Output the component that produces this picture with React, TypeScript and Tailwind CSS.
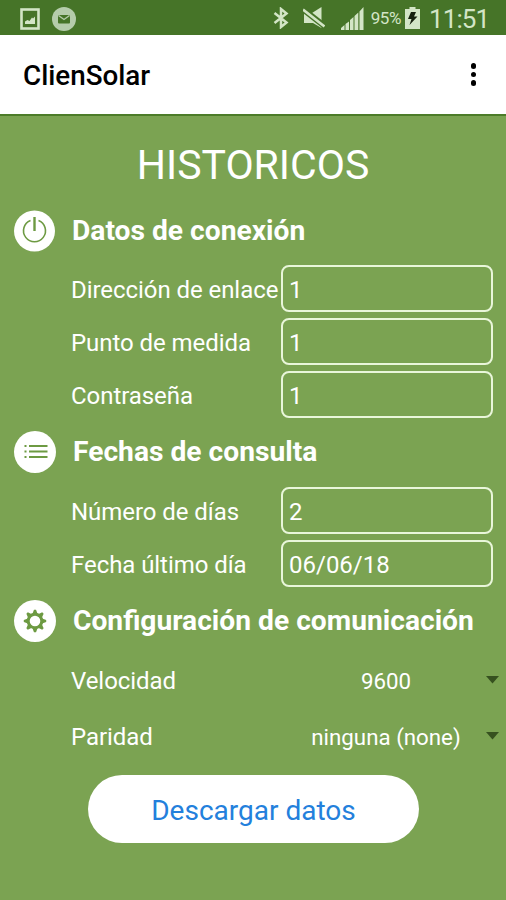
import type { ReactNode } from 'react'

function StatusBar() {
  return (
    <div className="flex h-[35px] shrink-0 items-center justify-between bg-[#467428] pl-5 pr-4 text-[#d3e5c6]">
      <div className="flex items-center gap-3 pt-0.5">
        <svg width="20" height="22" viewBox="0 0 20 22">
          <rect x="1.5" y="1.5" width="17" height="19" fill="none" stroke="currentColor" strokeWidth="2.6" />
          <path d="M5 16v-2.500l2.500-1.500 2 1L12 9.500l1 1 2-2V16z" fill="currentColor" />
        </svg>
        <svg width="24" height="24" viewBox="0 0 24 24">
          <circle cx="12" cy="12" r="12" fill="#b5ccab" />
          <rect x="6" y="8" width="12" height="8.500" rx="1" fill="#467428" />
          <path d="M6.500 8.500L12 12.500l5.500-4" fill="none" stroke="#b5ccab" strokeWidth="1.400" />
        </svg>
      </div>
      <div className="flex items-center pt-px">
        <svg width="16" height="22" viewBox="0 0 16 22" fill="none" stroke="currentColor" strokeWidth="2.500">
          <path d="M1.500 6L13.500 15.500L8 20V2L13.500 6.500L1.500 16" />
        </svg>
        <svg className="ml-[14px]" width="22" height="22" viewBox="0 0 22 22">
          <path d="M1 6h8l9.500-6v21L10 16H1z" fill="currentColor" />
          <path d="M-1 1.500L22 19.500" stroke="#467428" strokeWidth="6" />
          <path d="M0 2.500L21.500 19.500" stroke="currentColor" strokeWidth="2.600" />
        </svg>
        <svg className="ml-4" width="23" height="23" viewBox="0 0 23 23" fill="currentColor">
          <path d="M0 23v-2l3.500-3v5zM4.500 23v-6l3.500-2.500V23zM9 23V13l3.500-3v13zM13.500 23V9l3.800-3.500V23zM18.500 23V4.500L22.500 0v23z" />
        </svg>
        <span className="ml-[7px] pt-px text-[17px] tracking-[-0.4px]">95%</span>
        <svg className="ml-1" width="15" height="22" viewBox="0 0 15 22">
          <path d="M4.500 0h6v2H15v20H0V2h4.500z" fill="currentColor" />
          <path d="M6 5h5l-2 4.500h3.500L4.500 18l2-6H3z" fill="#15200d" />
        </svg>
        <span className="ml-[9px] w-[61px] pt-0.5 text-[26px] leading-none tracking-[-0.9px]">11:51</span>
      </div>
    </div>
  )
}

function AppBar() {
  return (
    <header className="flex h-[81px] shrink-0 items-center justify-between border-b-2 border-[#4c7c29] bg-white pl-[23px] pr-[30px] text-black">
      <span className="pt-[3px] text-[27.8px] font-medium">ClienSolar</span>
      <button aria-label="Menu" className="flex flex-col gap-[3px]">
        <span className="size-[5.5px] rounded-full bg-black" />
        <span className="size-[5.5px] rounded-full bg-black" />
        <span className="size-[5.5px] rounded-full bg-black" />
      </button>
    </header>
  )
}

function PowerIcon() {
  return (
    <svg width="41" height="42" viewBox="0 0 41 42" fill="none" stroke="#6d9a42">
      <circle cx="20.5" cy="21" r="20.5" fill="#fff" stroke="none" />
      <path d="M16.500 10.500a11 11 0 1 0 8 0" strokeWidth="1.600" />
      <path d="M20.500 7v14" strokeWidth="2.400" />
    </svg>
  )
}

function ListIcon() {
  return (
    <svg width="42" height="42" viewBox="0 0 42 42" fill="none" stroke="#6d9a42" strokeWidth="1.800">
      <circle cx="21" cy="21" r="21" fill="#fff" stroke="none" />
      <path d="M10.500 15h2M10.500 20.500h2M10.500 26h2M15 15h18.500M15 20.500h18.500M15 26h18.500" />
    </svg>
  )
}

function GearIcon() {
  return (
    <svg width="42" height="42" viewBox="0 0 42 42">
      <circle cx="21" cy="21" r="21" fill="#fff" />
      <g fill="#6d9a42">
        {[0, 45, 90, 135, 180, 225, 270, 315].map(a => (
          <path key={a} d="M18.200 14.500L20 9.800h2l1.800 4.700z" transform={`rotate(${a} 21 21)`} />
        ))}
      </g>
      <circle cx="21" cy="21" r="6.800" fill="none" stroke="#6d9a42" strokeWidth="3" />
    </svg>
  )
}

interface SectionProps {
  icon: ReactNode
  title: string
  children: ReactNode
}

function Section({ icon, title, children }: SectionProps) {
  return (
    <section className="mb-[13px]">
      <div className="flex h-[42px] items-center gap-[17px] pl-[14px]">
        {icon}
        <h2 className="whitespace-nowrap text-[28.2px] font-bold leading-[42px]">{title}</h2>
      </div>
      {children}
    </section>
  )
}

function Field({ label, value }: { label: string; value: string }) {
  return (
    <label className="flex h-[47px] items-center pl-[71px] pr-[13px] text-[24px]">
      <span className="w-[210px] shrink-0 whitespace-nowrap pt-0.5 tracking-[-0.06px]">{label}</span>
      <input
        defaultValue={value}
        className="h-full w-0 grow rounded-lg border-2 border-[#e9f6da] bg-transparent pl-1.5 pt-0.5 outline-none"
      />
    </label>
  )
}

function SelectRow({ label, value }: { label: string; value: string }) {
  return (
    <div className="flex h-14 items-center pl-[71px] pr-1.5">
      <span className="w-[210px] text-[24px] tracking-[-0.06px]">{label}</span>
      <span className="w-[210px] pt-0.5 text-center text-[22.3px]">{value}</span>
      <svg className="-ml-[5px] mb-0.5" width="13" height="8" viewBox="0 0 13 8">
        <path d="M0 0h13L6.500 7.500z" fill="#36511f" />
      </svg>
    </div>
  )
}

export default function App() {
  return (
    <div className="flex h-[900px] w-[506px] flex-col overflow-hidden bg-[#7ba352] font-[Roboto,sans-serif] text-white">
      <StatusBar />
      <AppBar />
      <main>
        <h1 className="pb-[18px] pt-[22px] text-center text-[41px] leading-[54px]">HISTORICOS</h1>
        <Section icon={<PowerIcon />} title="Datos de conexión">
          <div className="flex flex-col gap-1.5 pt-[13px]">
            <Field label="Dirección de enlace" value="1" />
            <Field label="Punto de medida" value="1" />
            <Field label="Contraseña" value="1" />
          </div>
        </Section>
        <Section icon={<ListIcon />} title="Fechas de consulta">
          <div className="flex flex-col gap-1.5 pt-[14px]">
            <Field label="Número de días" value="2" />
            <Field label="Fecha último día" value="06/06/18" />
          </div>
        </Section>
        <Section icon={<GearIcon />} title="Configuración de comunicación">
          <div className="pt-[11px]">
            <SelectRow label="Velocidad" value="9600" />
            <SelectRow label="Paridad" value="ninguna (none)" />
          </div>
        </Section>
        <button className="-mt-[3px] ml-[88px] h-[68px] w-[331px] rounded-full bg-white pt-[3px] text-[28px] text-[#2380dc]">
          Descargar datos
        </button>
      </main>
    </div>
  )
}
